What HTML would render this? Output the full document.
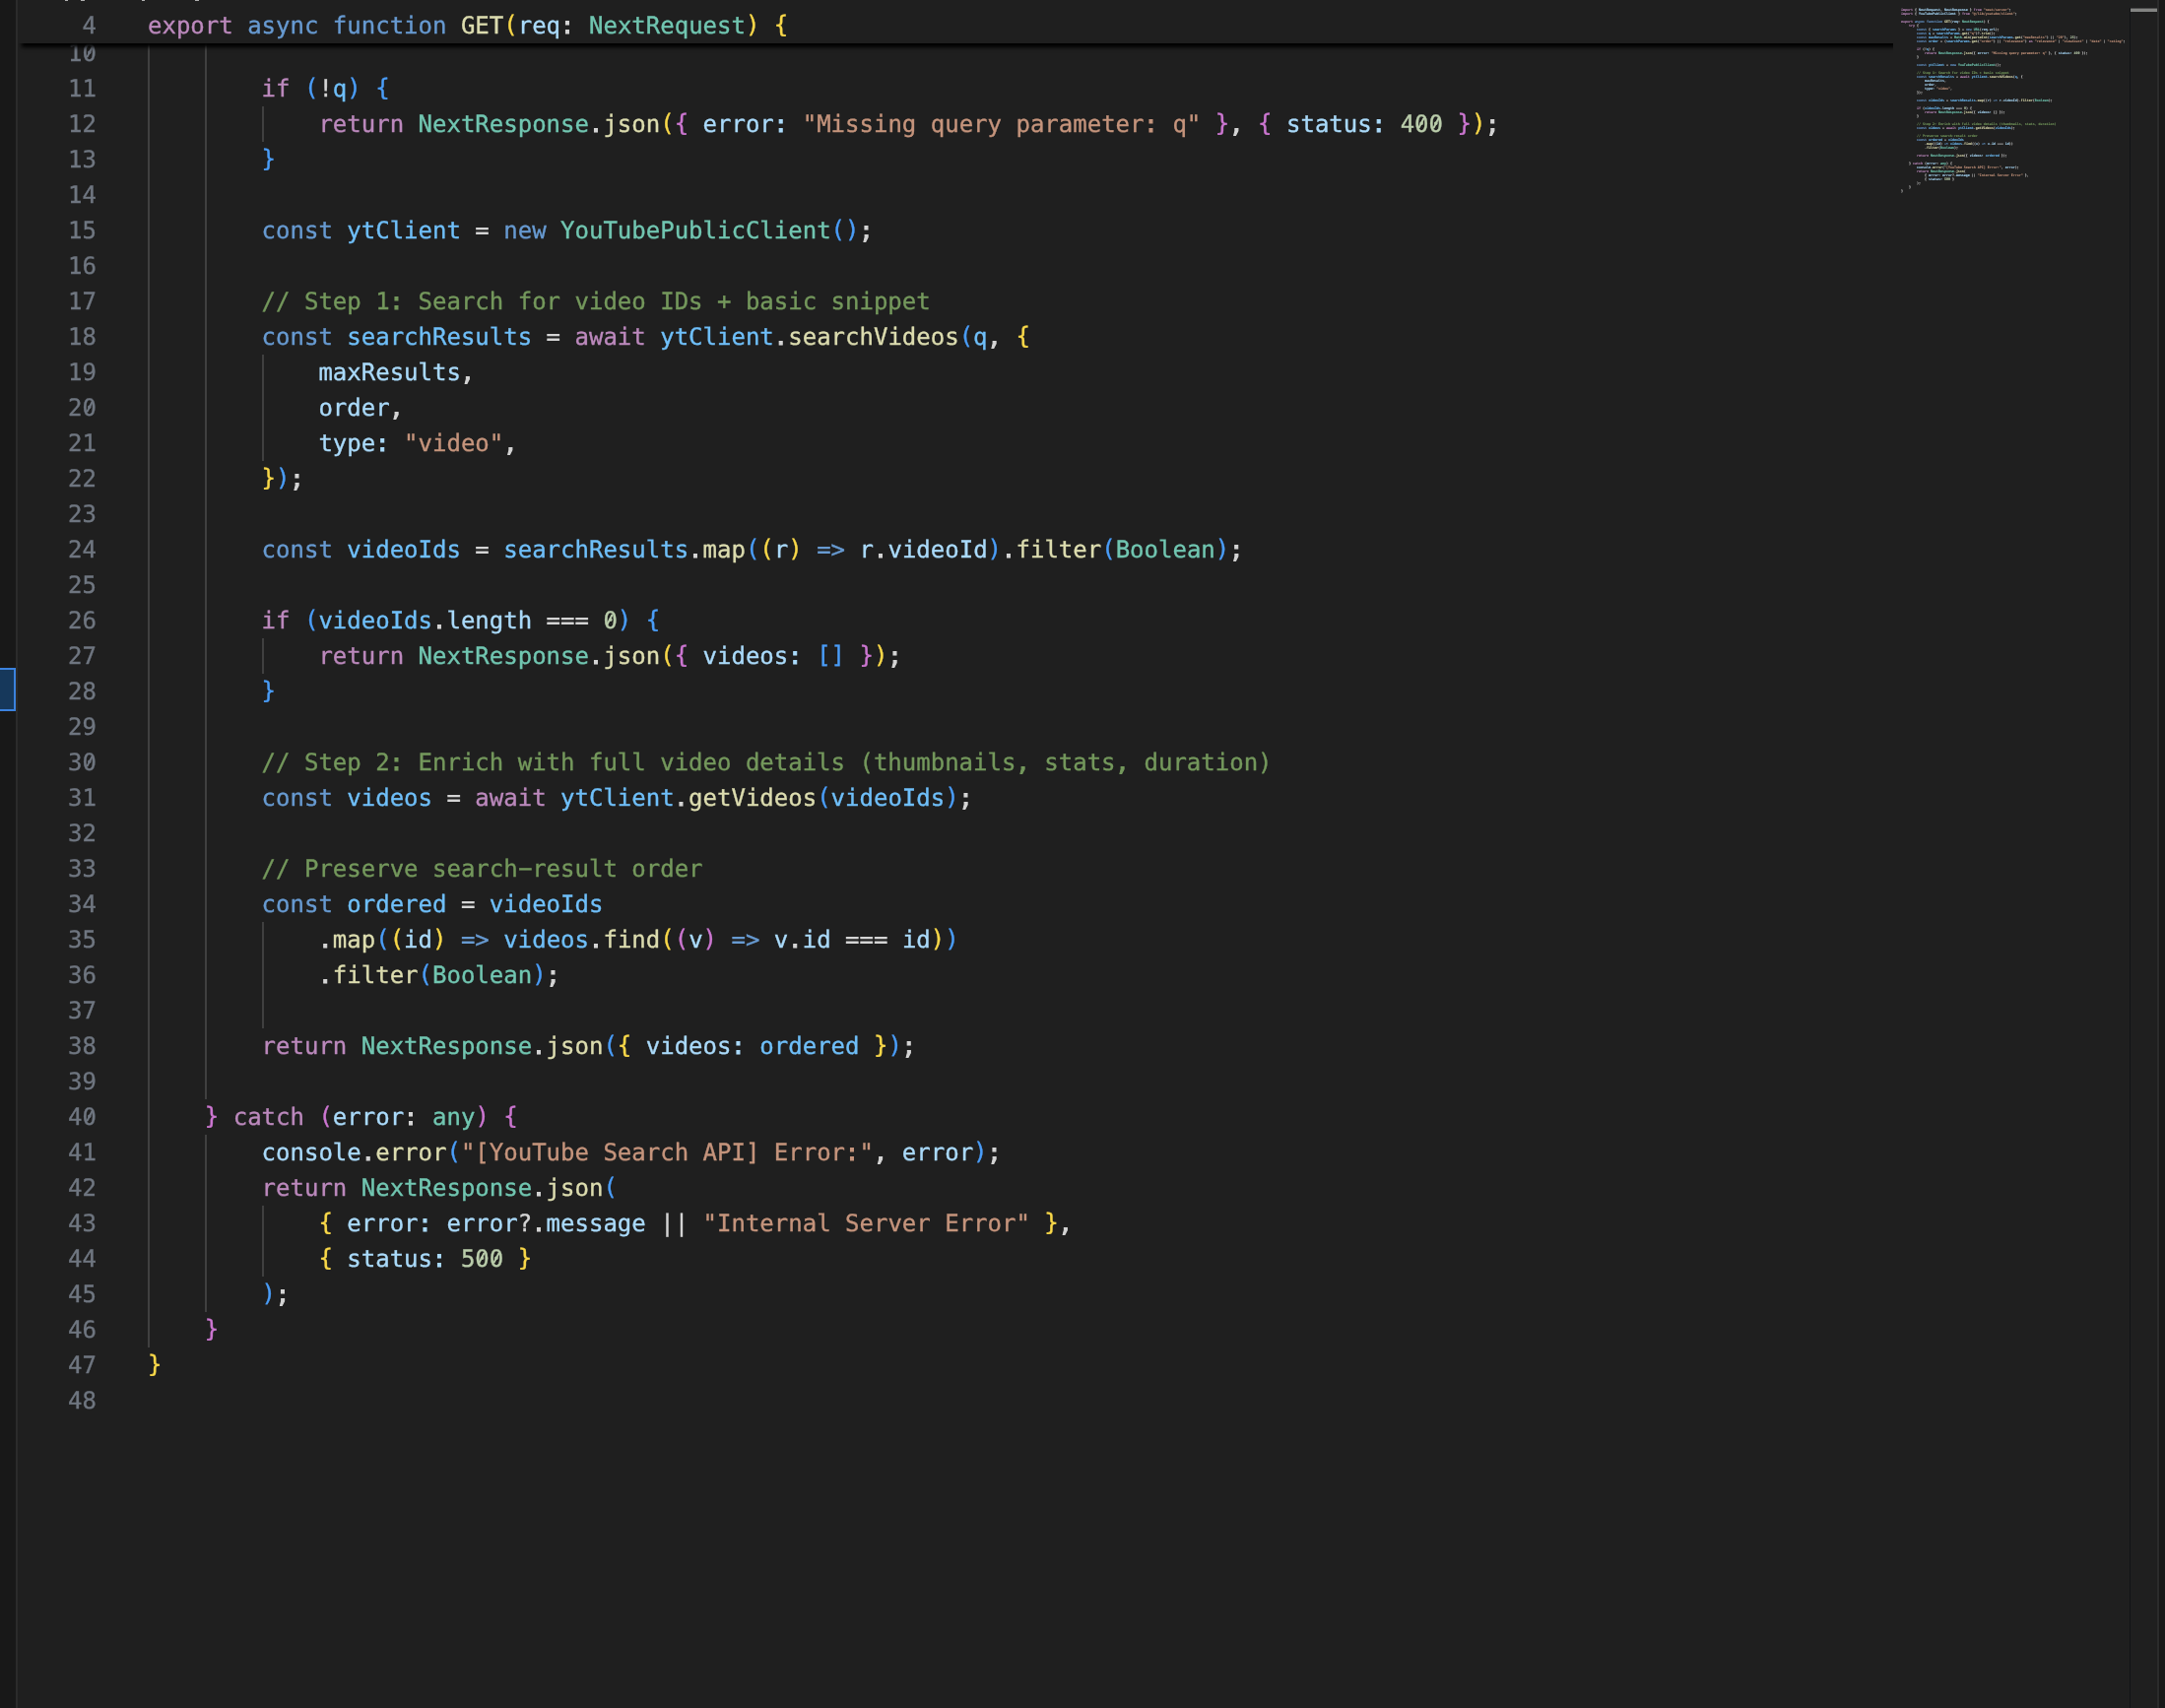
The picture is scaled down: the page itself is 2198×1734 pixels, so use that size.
<!DOCTYPE html>
<html lang="en">
<head>
<meta charset="utf-8">
<title>route.ts</title>
<style>
html,body{margin:0;padding:0;background:#1f1f1f;overflow:hidden;}
body{-webkit-font-smoothing:antialiased;text-rendering:geometricPrecision;width:2198px;height:1734px;overflow:hidden;position:relative;font-family:"DejaVu Sans Mono","Liberation Mono",monospace;font-size:24px;color:#d4d4d4;}
#left{position:absolute;left:0;top:0;width:16px;height:1734px;background:#181818;border-right:2px solid #2b2b2b;}
#sel{position:absolute;left:-4px;top:678px;width:16px;height:40px;background:#16385b;border:2px solid #3b82de;}
#right{position:absolute;left:2190px;top:0;width:6px;height:1734px;background:#181818;border-left:2px solid #2b2b2b;}
#ed{position:absolute;left:18px;top:0;width:2172px;height:1734px;overflow:hidden;background:#1f1f1f;}
.tx{position:absolute;left:0;top:0;width:100%;height:100%;will-change:transform;}
.ln,.cl{-webkit-text-stroke:0.35px currentColor;}
.cl span{-webkit-text-stroke:0.35px currentColor;}
.cl .g1,.cl .g2,.cl .g3{position:relative;top:-1.5px;}
.cl i{font-style:normal;-webkit-text-stroke:1.05px currentColor;position:relative;left:-0.3px;top:-0.35px;}
.cl em{font-style:normal;display:inline-block;transform:translateY(-1.3px) scaleX(1.95);}
.z{font-weight:normal;position:relative;display:inline-block;height:28px;line-height:28px;vertical-align:top;margin-top:4px;}
.z::after{content:"";position:absolute;left:50%;top:13.3px;width:2.3px;height:12px;margin:-6px 0 0 -1.15px;background:currentColor;transform:rotate(27deg);border-radius:1px;}
.ln{position:absolute;left:0;width:80px;height:36px;line-height:36px;text-align:right;color:#6f7680;white-space:pre;}
.cl{position:absolute;left:132px;height:36px;line-height:36px;white-space:pre;}
.gd{position:absolute;width:2px;background:#404040;}
#sticky{position:absolute;left:0;top:8px;width:1930px;height:36px;background:#1f1f1f;box-shadow:0 8px 4px -4px #000;z-index:5;}
#crumb{position:absolute;left:0;top:0;width:2172px;height:8px;background:#1f1f1f;z-index:6;}
#crumb i{position:absolute;top:0;height:1px;background:#b0b0b0;display:block;}
.k{color:#bc89bd}.b{color:#679ad1}.f{color:#dcdcaf}.v{color:#aadafa}.c{color:#6fbff9}.t{color:#71c6b1}.s{color:#c5947c}.n{color:#bacdab}.m{color:#74985c}
.g1{color:#f9d849}.g2{color:#cc76d1}.g3{color:#4a9df8}
#mmbg{position:absolute;left:1904px;top:0;width:268px;height:1734px;background:#1f1f1f;z-index:7;}
#mm{will-change:transform;position:absolute;left:1912px;top:8px;width:232px;height:1726px;overflow:hidden;font-size:3.322px;line-height:4px;font-weight:bold;white-space:pre;z-index:8;-webkit-text-stroke:0.06px currentColor;}
#mm div{height:4px;}
#mm .g1,#mm .g2,#mm .g3{color:#d4d4d4}
#ovl{z-index:8;position:absolute;left:2144px;top:8px;width:1px;height:1726px;background:#121316;}
#cur{z-index:8;position:absolute;left:2145px;top:8px;width:27px;height:4px;background:linear-gradient(#4c4c4c 0,#4c4c4c 1px,#838482 1px);}
</style>
</head>
<body>
<div id="left"><div id="sel"></div></div>
<div id="ed">
<div class="gd" style="left:132px;top:36px;height:1332px"></div>
<div class="gd" style="left:190px;top:36px;height:1080px"></div>
<div class="gd" style="left:190px;top:1152px;height:180px"></div>
<div class="gd" style="left:248px;top:108px;height:36px"></div>
<div class="gd" style="left:248px;top:360px;height:108px"></div>
<div class="gd" style="left:248px;top:648px;height:36px"></div>
<div class="gd" style="left:248px;top:936px;height:108px"></div>
<div class="gd" style="left:248px;top:1224px;height:72px"></div>
<div class="tx">
<div class="ln" style="top:36px">1<b class="z">0</b></div>
<div class="ln" style="top:72px">11</div><div class="cl" style="top:72px">        <span class="k">if</span> <span class="g3">(</span>!<span class="c">q</span><span class="g3">)</span> <span class="g3">{</span></div>
<div class="ln" style="top:108px">12</div><div class="cl" style="top:108px">            <span class="k">return</span> <span class="t">NextResponse</span><i>.</i><span class="f">json</span><span class="g1">(</span><span class="g2">{</span> <span class="v">error<i>:</i></span> <span class="s">"Missing query parameter<i>:</i> q"</span> <span class="g2">}</span><i>,</i> <span class="g2">{</span> <span class="v">status<i>:</i></span> <span class="n">4<b class="z">0</b><b class="z">0</b></span> <span class="g2">}</span><span class="g1">)</span><i>;</i></div>
<div class="ln" style="top:144px">13</div><div class="cl" style="top:144px">        <span class="g3">}</span></div>
<div class="ln" style="top:180px">14</div>
<div class="ln" style="top:216px">15</div><div class="cl" style="top:216px">        <span class="b">const</span> <span class="c">ytClient</span> = <span class="b">new</span> <span class="t">YouTubePublicClient</span><span class="g3">()</span><i>;</i></div>
<div class="ln" style="top:252px">16</div>
<div class="ln" style="top:288px">17</div><div class="cl" style="top:288px">        <span class="m">// Step 1<i>:</i> Search for video IDs + basic snippet</span></div>
<div class="ln" style="top:324px">18</div><div class="cl" style="top:324px">        <span class="b">const</span> <span class="c">searchResults</span> = <span class="k">await</span> <span class="c">ytClient</span><i>.</i><span class="f">searchVideos</span><span class="g3">(</span><span class="c">q</span><i>,</i> <span class="g1">{</span></div>
<div class="ln" style="top:360px">19</div><div class="cl" style="top:360px">            <span class="v">maxResults</span><i>,</i></div>
<div class="ln" style="top:396px">2<b class="z">0</b></div><div class="cl" style="top:396px">            <span class="v">order</span><i>,</i></div>
<div class="ln" style="top:432px">21</div><div class="cl" style="top:432px">            <span class="v">type<i>:</i></span> <span class="s">"video"</span><i>,</i></div>
<div class="ln" style="top:468px">22</div><div class="cl" style="top:468px">        <span class="g1">}</span><span class="g3">)</span><i>;</i></div>
<div class="ln" style="top:504px">23</div>
<div class="ln" style="top:540px">24</div><div class="cl" style="top:540px">        <span class="b">const</span> <span class="c">videoIds</span> = <span class="c">searchResults</span><i>.</i><span class="f">map</span><span class="g3">(</span><span class="g1">(</span><span class="v">r</span><span class="g1">)</span> <span class="b">=&gt;</span> <span class="v">r</span><i>.</i><span class="v">videoId</span><span class="g3">)</span><i>.</i><span class="f">filter</span><span class="g3">(</span><span class="t">Boolean</span><span class="g3">)</span><i>;</i></div>
<div class="ln" style="top:576px">25</div>
<div class="ln" style="top:612px">26</div><div class="cl" style="top:612px">        <span class="k">if</span> <span class="g3">(</span><span class="c">videoIds</span><i>.</i><span class="v">length</span> === <span class="n"><b class="z">0</b></span><span class="g3">)</span> <span class="g3">{</span></div>
<div class="ln" style="top:648px">27</div><div class="cl" style="top:648px">            <span class="k">return</span> <span class="t">NextResponse</span><i>.</i><span class="f">json</span><span class="g1">(</span><span class="g2">{</span> <span class="v">videos<i>:</i></span> <span class="g3">[]</span> <span class="g2">}</span><span class="g1">)</span><i>;</i></div>
<div class="ln" style="top:684px">28</div><div class="cl" style="top:684px">        <span class="g3">}</span></div>
<div class="ln" style="top:720px">29</div>
<div class="ln" style="top:756px">3<b class="z">0</b></div><div class="cl" style="top:756px">        <span class="m">// Step 2<i>:</i> Enrich with full video details (thumbnails<i>,</i> stats<i>,</i> duration)</span></div>
<div class="ln" style="top:792px">31</div><div class="cl" style="top:792px">        <span class="b">const</span> <span class="c">videos</span> = <span class="k">await</span> <span class="c">ytClient</span><i>.</i><span class="f">getVideos</span><span class="g3">(</span><span class="c">videoIds</span><span class="g3">)</span><i>;</i></div>
<div class="ln" style="top:828px">32</div>
<div class="ln" style="top:864px">33</div><div class="cl" style="top:864px">        <span class="m">// Preserve search<em>-</em>result order</span></div>
<div class="ln" style="top:900px">34</div><div class="cl" style="top:900px">        <span class="b">const</span> <span class="c">ordered</span> = <span class="c">videoIds</span></div>
<div class="ln" style="top:936px">35</div><div class="cl" style="top:936px">            <i>.</i><span class="f">map</span><span class="g3">(</span><span class="g1">(</span><span class="v">id</span><span class="g1">)</span> <span class="b">=&gt;</span> <span class="c">videos</span><i>.</i><span class="f">find</span><span class="g1">(</span><span class="g2">(</span><span class="v">v</span><span class="g2">)</span> <span class="b">=&gt;</span> <span class="v">v</span><i>.</i><span class="v">id</span> === <span class="v">id</span><span class="g1">)</span><span class="g3">)</span></div>
<div class="ln" style="top:972px">36</div><div class="cl" style="top:972px">            <i>.</i><span class="f">filter</span><span class="g3">(</span><span class="t">Boolean</span><span class="g3">)</span><i>;</i></div>
<div class="ln" style="top:1008px">37</div>
<div class="ln" style="top:1044px">38</div><div class="cl" style="top:1044px">        <span class="k">return</span> <span class="t">NextResponse</span><i>.</i><span class="f">json</span><span class="g3">(</span><span class="g1">{</span> <span class="v">videos<i>:</i></span> <span class="c">ordered</span> <span class="g1">}</span><span class="g3">)</span><i>;</i></div>
<div class="ln" style="top:1080px">39</div>
<div class="ln" style="top:1116px">4<b class="z">0</b></div><div class="cl" style="top:1116px">    <span class="g2">}</span> <span class="k">catch</span> <span class="g2">(</span><span class="v">error</span><i>:</i> <span class="t">any</span><span class="g2">)</span> <span class="g2">{</span></div>
<div class="ln" style="top:1152px">41</div><div class="cl" style="top:1152px">        <span class="v">console</span><i>.</i><span class="f">error</span><span class="g3">(</span><span class="s">"[YouTube Search API] Error<i>:</i>"</span><i>,</i> <span class="v">error</span><span class="g3">)</span><i>;</i></div>
<div class="ln" style="top:1188px">42</div><div class="cl" style="top:1188px">        <span class="k">return</span> <span class="t">NextResponse</span><i>.</i><span class="f">json</span><span class="g3">(</span></div>
<div class="ln" style="top:1224px">43</div><div class="cl" style="top:1224px">            <span class="g1">{</span> <span class="v">error<i>:</i></span> <span class="v">error</span>?<i>.</i><span class="v">message</span> || <span class="s">"Internal Server Error"</span> <span class="g1">}</span><i>,</i></div>
<div class="ln" style="top:1260px">44</div><div class="cl" style="top:1260px">            <span class="g1">{</span> <span class="v">status<i>:</i></span> <span class="n">5<b class="z">0</b><b class="z">0</b></span> <span class="g1">}</span></div>
<div class="ln" style="top:1296px">45</div><div class="cl" style="top:1296px">        <span class="g3">)</span><i>;</i></div>
<div class="ln" style="top:1332px">46</div><div class="cl" style="top:1332px">    <span class="g2">}</span></div>
<div class="ln" style="top:1368px">47</div><div class="cl" style="top:1368px"><span class="g1">}</span></div>
<div class="ln" style="top:1404px">48</div>
</div>
<div id="sticky"><div class="tx"><div class="ln" style="top:0">4</div><div class="cl" style="top:0"><span class="k">export</span> <span class="b">async</span> <span class="b">function</span> <span class="f">GET</span><span class="g1">(</span><span class="v">req</span><i>:</i> <span class="t">NextRequest</span><span class="g1">)</span> <span class="g1">{</span></div></div></div>
<div id="crumb"><i style="left:47.5px;width:3.5px"></i><i style="left:64px;width:3.5px"></i><i style="left:126px;width:3px"></i><i style="left:180px;width:3.5px"></i></div>
<div id="mmbg"></div><div id="mm"><div><span class="k">import</span> <span class="g1">{</span> <span class="v">NextRequest</span>, <span class="v">NextResponse</span> <span class="g1">}</span> <span class="k">from</span> <span class="s">"next/server"</span>;</div><div><span class="k">import</span> <span class="g1">{</span> <span class="v">YouTubePublicClient</span> <span class="g1">}</span> <span class="k">from</span> <span class="s">"@/lib/youtube/client"</span>;</div><div></div><div><span class="k">export</span> <span class="b">async</span> <span class="b">function</span> <span class="f">GET</span><span class="g1">(</span><span class="v">req</span>: <span class="t">NextRequest</span><span class="g1">)</span> <span class="g1">{</span></div><div>    <span class="k">try</span> <span class="g2">{</span></div><div>        <span class="b">const</span> <span class="g3">{</span> <span class="c">searchParams</span> <span class="g3">}</span> = <span class="b">new</span> <span class="t">URL</span><span class="g3">(</span><span class="v">req</span>.<span class="v">url</span><span class="g3">)</span>;</div><div>        <span class="b">const</span> <span class="c">q</span> = <span class="c">searchParams</span>.<span class="f">get</span><span class="g3">(</span><span class="s">"q"</span><span class="g3">)</span>?.<span class="f">trim</span><span class="g3">()</span>;</div><div>        <span class="b">const</span> <span class="c">maxResults</span> = <span class="t">Math</span>.<span class="f">min</span><span class="g3">(</span><span class="f">parseInt</span><span class="g1">(</span><span class="c">searchParams</span>.<span class="f">get</span><span class="g2">(</span><span class="s">"maxResults"</span><span class="g2">)</span> || <span class="s">"20"</span><span class="g1">)</span>, <span class="n">25</span><span class="g3">)</span>;</div><div>        <span class="b">const</span> <span class="c">order</span> = <span class="g3">(</span><span class="c">searchParams</span>.<span class="f">get</span><span class="g1">(</span><span class="s">"order"</span><span class="g1">)</span> || <span class="s">"relevance"</span><span class="g3">)</span> <span class="k">as</span> <span class="s">"relevance"</span> | <span class="s">"viewCount"</span> | <span class="s">"date"</span> | <span class="s">"rating"</span>;</div><div></div><div>        <span class="k">if</span> <span class="g3">(</span>!<span class="c">q</span><span class="g3">)</span> <span class="g3">{</span></div><div>            <span class="k">return</span> <span class="t">NextResponse</span>.<span class="f">json</span><span class="g1">(</span><span class="g2">{</span> <span class="v">error:</span> <span class="s">"Missing query parameter: q"</span> <span class="g2">}</span>, <span class="g2">{</span> <span class="v">status:</span> <span class="n">400</span> <span class="g2">}</span><span class="g1">)</span>;</div><div>        <span class="g3">}</span></div><div></div><div>        <span class="b">const</span> <span class="c">ytClient</span> = <span class="b">new</span> <span class="t">YouTubePublicClient</span><span class="g3">()</span>;</div><div></div><div>        <span class="m">// Step 1: Search for video IDs + basic snippet</span></div><div>        <span class="b">const</span> <span class="c">searchResults</span> = <span class="k">await</span> <span class="c">ytClient</span>.<span class="f">searchVideos</span><span class="g3">(</span><span class="c">q</span>, <span class="g1">{</span></div><div>            <span class="v">maxResults</span>,</div><div>            <span class="v">order</span>,</div><div>            <span class="v">type:</span> <span class="s">"video"</span>,</div><div>        <span class="g1">}</span><span class="g3">)</span>;</div><div></div><div>        <span class="b">const</span> <span class="c">videoIds</span> = <span class="c">searchResults</span>.<span class="f">map</span><span class="g3">(</span><span class="g1">(</span><span class="v">r</span><span class="g1">)</span> <span class="b">=&gt;</span> <span class="v">r</span>.<span class="v">videoId</span><span class="g3">)</span>.<span class="f">filter</span><span class="g3">(</span><span class="t">Boolean</span><span class="g3">)</span>;</div><div></div><div>        <span class="k">if</span> <span class="g3">(</span><span class="c">videoIds</span>.<span class="v">length</span> === <span class="n">0</span><span class="g3">)</span> <span class="g3">{</span></div><div>            <span class="k">return</span> <span class="t">NextResponse</span>.<span class="f">json</span><span class="g1">(</span><span class="g2">{</span> <span class="v">videos:</span> <span class="g3">[]</span> <span class="g2">}</span><span class="g1">)</span>;</div><div>        <span class="g3">}</span></div><div></div><div>        <span class="m">// Step 2: Enrich with full video details (thumbnails, stats, duration)</span></div><div>        <span class="b">const</span> <span class="c">videos</span> = <span class="k">await</span> <span class="c">ytClient</span>.<span class="f">getVideos</span><span class="g3">(</span><span class="c">videoIds</span><span class="g3">)</span>;</div><div></div><div>        <span class="m">// Preserve search-result order</span></div><div>        <span class="b">const</span> <span class="c">ordered</span> = <span class="c">videoIds</span></div><div>            .<span class="f">map</span><span class="g3">(</span><span class="g1">(</span><span class="v">id</span><span class="g1">)</span> <span class="b">=&gt;</span> <span class="c">videos</span>.<span class="f">find</span><span class="g1">(</span><span class="g2">(</span><span class="v">v</span><span class="g2">)</span> <span class="b">=&gt;</span> <span class="v">v</span>.<span class="v">id</span> === <span class="v">id</span><span class="g1">)</span><span class="g3">)</span></div><div>            .<span class="f">filter</span><span class="g3">(</span><span class="t">Boolean</span><span class="g3">)</span>;</div><div></div><div>        <span class="k">return</span> <span class="t">NextResponse</span>.<span class="f">json</span><span class="g3">(</span><span class="g1">{</span> <span class="v">videos:</span> <span class="c">ordered</span> <span class="g1">}</span><span class="g3">)</span>;</div><div></div><div>    <span class="g2">}</span> <span class="k">catch</span> <span class="g2">(</span><span class="v">error</span>: <span class="t">any</span><span class="g2">)</span> <span class="g2">{</span></div><div>        <span class="v">console</span>.<span class="f">error</span><span class="g3">(</span><span class="s">"[YouTube Search API] Error:"</span>, <span class="v">error</span><span class="g3">)</span>;</div><div>        <span class="k">return</span> <span class="t">NextResponse</span>.<span class="f">json</span><span class="g3">(</span></div><div>            <span class="g1">{</span> <span class="v">error:</span> <span class="v">error</span>?.<span class="v">message</span> || <span class="s">"Internal Server Error"</span> <span class="g1">}</span>,</div><div>            <span class="g1">{</span> <span class="v">status:</span> <span class="n">500</span> <span class="g1">}</span></div><div>        <span class="g3">)</span>;</div><div>    <span class="g2">}</span></div><div><span class="g1">}</span></div><div></div></div>
<div id="ovl"></div><div id="cur"></div>
</div>
<div id="right"></div>
</body>
</html>
